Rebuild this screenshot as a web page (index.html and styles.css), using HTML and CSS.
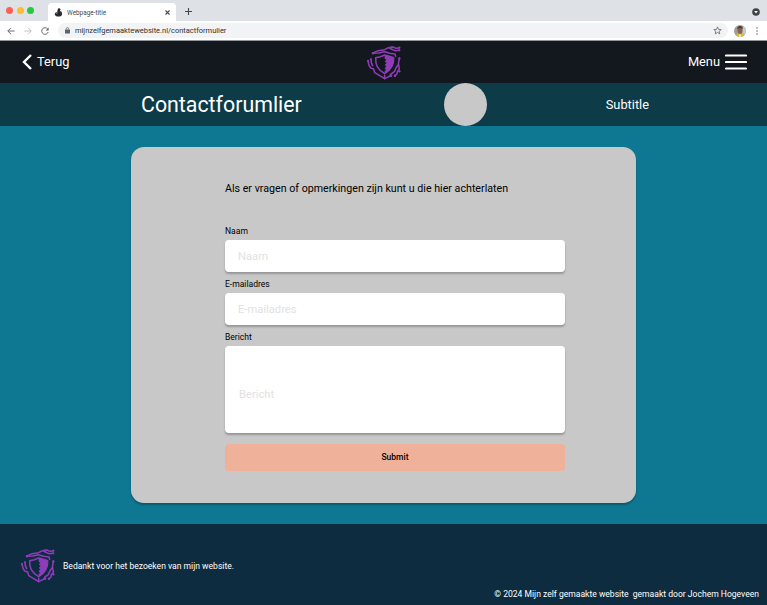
FILE: index.html
```
<!DOCTYPE html>
<html lang="nl">
<head>
<meta charset="utf-8">
<title>Contactformulier</title>
<link rel="stylesheet" href="styles.css">
</head>
<body>
<svg class="symbols" aria-hidden="true">
  <symbol id="shield" viewBox="0 0 102 102">
    <g fill="none" stroke="#8f3cb8" stroke-width="4.6" stroke-linejoin="round" stroke-linecap="round">
      <path d="M18 21L34 14L53 11L64 5L73 9L83 14L97 13"/>
      <path d="M69 4L78 3L87 7L96 6"/>
      <path d="M18 22L35 21L53 17L68 22L84 24L86 31"/>
      <path d="M53 27L40 32L26 35C25 57 32 70 53 83C74 70 81 56 80 35L67 31Z"/>
      <path d="M3 45L6 58L11 66L20 69L23 80L37 88L53 98L53 88"/>
      <path d="M12 40L13 50L17 59"/>
      <path d="M97 37L94 55L87 66L82 77L72 84L67 91L53 98"/>
      <path d="M95 56L97 70L91 77L90 84L84 89"/>
    </g>
    <path fill="#8f3cb8" d="M53 27L67 31L80 35C81 56 74 70 53 83L53 75L57 72L53 67L58 61L53 57L59 50L53 47L58 41L53 38Z"/>
    <g fill="#8f3cb8"><circle cx="18" cy="22" r="3.8"/><circle cx="3" cy="44" r="3"/><circle cx="12" cy="40" r="3"/><circle cx="97" cy="5" r="3.3"/><circle cx="97" cy="13" r="3.3"/><circle cx="97" cy="37" r="3.5"/><circle cx="97" cy="76" r="3.5"/><circle cx="84" cy="89" r="3.8"/><circle cx="72" cy="89" r="3.8"/></g>
  </symbol>
</svg>

<div class="tabs">
  <span class="light red"></span><span class="light amber"></span><span class="light green"></span>
  <div class="tab">
    <svg class="favicon" viewBox="0 0 9 9"><path d="M4 .5Q6-.3 6.5 1.2L6 3Q8.5 3.5 8 6.5Q7.5 9 5 8.5Q2 9 .8 6.7Q.4 4.5 3.1 4Z" fill="#292b2e"/><path d="M2.2 4.8L3.6 4.2L3.8 5L2.4 6Z" fill="#999"/></svg>
    <span class="tab-title">Webpage-title</span>
    <svg class="close" viewBox="0 0 5 5"><path d="M.5.5L4.5 4.5M4.5.5L.5 4.5" stroke="#45494d" stroke-width="1.1"/></svg>
  </div>
  <svg class="plus" viewBox="0 0 7 7"><path d="M3.5 0V7M0 3.5H7" stroke="#45494d" stroke-width="1.1"/></svg>
  <svg class="dropdown" viewBox="0 0 8 8"><circle cx="4" cy="4" r="3.8" fill="#3f4347"/><path d="M2.2 3.1H5.8L4 5.6Z" fill="#fff"/></svg>
</div>

<div class="toolbar">
  <svg class="nav" viewBox="0 0 8 8"><path d="M7.6 4H.8M4 .8L.8 4L4 7.2" fill="none" stroke="#5f6368" stroke-width=".95"/></svg>
  <svg class="nav" viewBox="0 0 8 8"><path d="M.4 4H7.2M4 .8L7.2 4L4 7.2" fill="none" stroke="#bcbfc2" stroke-width=".95"/></svg>
  <svg class="nav" viewBox="0 0 8 8"><path d="M6.8 2.2A3.3 3.3 0 1 0 7.2 5" fill="none" stroke="#5f6368" stroke-width=".95"/><path d="M7.6.4V3.4H4.6Z" fill="#5f6368"/></svg>
  <div class="address">
    <svg class="lock" viewBox="0 0 5 7"><rect y="2.4" width="5" height="4.2" rx=".5" fill="#5f6368"/><path d="M1.2 2.7V1.8Q1.2.6 2.5.6T3.8 1.8V2.7" fill="none" stroke="#5f6368" stroke-width=".7"/></svg>
    <span class="url">mijnzelfgemaaktewebsite.nl/contactformulier</span>
    <svg class="star" viewBox="0 0 9 9"><path d="M4.5.9L5.5 3.4L8.2 3.6L6.1 5.3L6.8 7.9L4.5 6.5L2.2 7.9L2.9 5.3L.8 3.6L3.5 3.4Z" fill="none" stroke="#5f6368" stroke-width=".8"/></svg>
  </div>
  <svg class="avatar" viewBox="0 0 12 12"><defs><clipPath id="round"><circle cx="6" cy="6" r="6"/></clipPath></defs><g clip-path="url(#round)"><path fill="#9aa19a" d="M0 0H12V12H0Z"/><path fill="#c5ccd2" d="M8.5 2H12V9H8.5Z"/><path fill="#e5b72d" d="M2 12L3 8.5L9 8L11 12Z"/><ellipse cx="6" cy="5.5" rx="2.4" ry="3.5" fill="#8b604d"/><path fill="#4a3c34" d="M3.2 4.5Q3 1 6 1T8.7 4.3L7.5 3.3H4.5Z"/><path fill="#eee" d="M5 8.5L6.3 10L7 8.5L6.8 12H5.5Z"/></g></svg>
  <svg class="dots" viewBox="0 0 2 8"><g fill="#5f6368"><circle cx="1" cy="1" r=".75"/><circle cx="1" cy="4" r=".75"/><circle cx="1" cy="7" r=".75"/></g></svg>
</div>

<header class="header">
  <a class="back"><svg viewBox="0 0 10 16"><path d="M9 1L2 8L9 15" fill="none" stroke="#fff" stroke-width="2.4"/></svg><span>Terug</span></a>
  <svg class="logo"><use href="#shield"/></svg>
  <a class="menu"><span>Menu</span><svg viewBox="0 0 22 16"><path d="M1 1.5H21M1 8H21M1 14.5H21" stroke="#fff" stroke-width="2.2" stroke-linecap="round"/></svg></a>
</header>

<div class="banner">
  <h1>Contactforumlier</h1>
  <span class="disc"></span>
  <span class="subtitle">Subtitle</span>
</div>

<main>
  <form class="card">
    <p>Als er vragen of opmerkingen zijn kunt u die hier achterlaten</p>
    <label for="naam">Naam</label>
    <input id="naam" placeholder="Naam">
    <label for="email">E-mailadres</label>
    <input id="email" placeholder="E-mailadres">
    <label for="bericht">Bericht</label>
    <input id="bericht" class="message" placeholder="Bericht">
    <button type="button">Submit</button>
  </form>
</main>

<footer>
  <div class="thanks"><svg class="logo"><use href="#shield"/></svg><span>Bedankt voor het bezoeken van mijn website.</span></div>
  <p class="copyright">© 2024 Mijn zelf gemaakte website&nbsp; gemaakt door Jochem Hogeveen</p>
</footer>
</body>
</html>
```
FILE: styles.css
```
* { box-sizing: border-box; }
body {
  margin: 0;
  height: 605px;
  overflow: hidden;
  display: flex;
  flex-direction: column;
  font-family: Roboto, "Liberation Sans", sans-serif;
  background: #0e7792;
}
svg { display: block; flex: none; }
.symbols { position: absolute; width: 0; height: 0; }
h1, p { margin: 0; font-weight: 400; }

.tabs {
  height: 21px;
  flex: none;
  display: flex;
  align-items: center;
  padding: 0 7px 0 6px;
  background: #dee1e6;
}
.light { width: 7px; height: 7px; border-radius: 50%; margin: 0 3.7px 1px 0; }
.red { background: #ff5f57; }
.amber { background: #febc2e; }
.green { background: #28c840; }
.tab {
  width: 128px;
  height: 18px;
  margin: 0 8.5px 0 10px;
  align-self: flex-end;
  display: flex;
  align-items: center;
  padding: 1px 6px 0;
  border-radius: 4px 4px 0 0;
  background: #fff;
}
.favicon { width: 9px; height: 9px; }
.tab-title { margin-left: 4px; font-size: 6.4px; color: #45494d; white-space: nowrap; }
.close { width: 5px; height: 5px; margin-left: auto; margin-bottom: 1px; }
.plus { width: 7px; height: 7px; margin-top: 2px; }
.dropdown { width: 8px; height: 8px; margin-left: auto; margin-top: 2px; }

.toolbar {
  height: 20px;
  flex: none;
  display: flex;
  align-items: center;
  padding: 0 9px 0 7px;
  background: #fff;
  border-bottom: 1px solid #92979c;
}
.nav { width: 8px; height: 8px; margin-right: 9px; }
.address {
  flex: 1;
  height: 15px;
  display: flex;
  align-items: center;
  padding: 0 6px 0 7px;
  border-radius: 8px;
  background: #f1f3f4;
}
.lock { width: 5px; height: 7px; }
.url { margin-left: 5px; font-size: 7.48px; color: #303236; white-space: nowrap; }
.star { width: 9px; height: 9px; margin-left: auto; }
.avatar { width: 12px; height: 12px; margin: 0 10px 0 6px; }
.dots { width: 2px; height: 8px; }

.header {
  height: 42px;
  flex: none;
  display: grid;
  grid-template-columns: 1fr 34px 1fr;
  align-items: center;
  padding: 0 20px 0 22px;
  background: #13171e;
  color: #fff;
  font-size: 12.8px;
}
.back, .menu { display: flex; align-items: center; gap: 5px; }
.back span, .menu span { margin-top: -1px; }
.back svg { width: 10px; height: 16px; }
.menu { justify-content: flex-end; }
.menu svg { width: 22px; height: 16px; }
.logo { width: 34px; height: 34px; }
.header .logo { margin: 1px 0 0 -1px; }

.banner {
  height: 43px;
  flex: none;
  display: flex;
  align-items: center;
  padding: 0 118px 0 141px;
  background: #0d3b47;
  color: #fff;
}
.banner h1 { width: 303px; font-size: 21.35px; }
.disc { width: 43px; height: 43px; border-radius: 50%; background: #c8c8c8; }
.subtitle { margin-left: auto; font-size: 12.8px; }

main { height: 398px; flex: none; padding: 20.5px 131px; }
.card {
  width: 504.5px;
  height: 356.5px;
  display: flex;
  flex-direction: column;
  padding: 35.5px 70.5px 0 94px;
  border-radius: 13px;
  background: #c8c8c8;
  box-shadow: 0 2px 2px rgba(0, 0, 0, .25);
}
.card p { height: 43px; font-size: 10.68px; line-height: 13px; white-space: nowrap; }
.card label { height: 15px; font-size: 8.55px; line-height: 13px; }
.card input {
  width: 340px;
  height: 32px;
  margin: 0 0 6px;
  padding: 0 13px;
  border: 0;
  border-radius: 4px;
  background: #fff;
  box-shadow: 0 2px 2px rgba(0, 0, 0, .25);
  font: 11.2px Roboto, "Liberation Sans", sans-serif;
}
.card input::placeholder { color: #e2e2e2; opacity: 1; }
.card .message { height: 87px; padding: 10px 14px 0; margin-bottom: 11px; }
.card button {
  width: 340px;
  height: 27px;
  padding: 0 0 1px;
  border: 0;
  border-radius: 4px;
  background: #f0b19b;
  color: #000;
  font: 500 8.5px Roboto, "Liberation Sans", sans-serif;
}

footer {
  height: 81px;
  flex: none;
  display: flex;
  flex-direction: column;
  padding: 25px 8px 0 21px;
  background: #0e2c40;
  color: #fff;
  font-size: 8.57px;
}
.thanks { display: flex; align-items: center; gap: 8px; }
.copyright { align-self: flex-end; margin-top: 6px; line-height: 11px; white-space: nowrap; }
```
